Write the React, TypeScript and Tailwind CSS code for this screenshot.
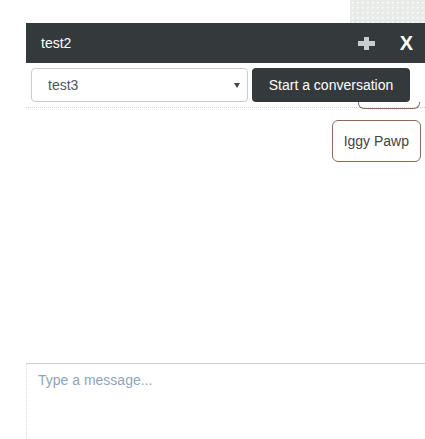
import React from 'react';

const ChatPanel: React.FC = () => {
  return (
    <div className="ml-[26px] flex flex-1 flex-col">
      <div className="flex h-[40px] items-center bg-[#343a3b] pl-[15px] pr-[12px] text-[14px] text-white">
        <span className="flex-1">test2</span>
        <svg width="17" height="13" viewBox="0 0 17 13" className="mr-[25px]">
          <rect x="0" y="4" width="17" height="5" fill="#c9cdd0" />
          <rect x="6" y="0" width="5" height="13" fill="#c9cdd0" />
        </svg>
        <span className="text-[20px] font-bold leading-none">X</span>
      </div>

      <div className="relative flex gap-[4px] border-b border-dotted border-[#d6d6d6] pb-[5px] pl-[5px] pr-[15px] pt-[5px]">
        {/* bottom of an earlier message, scrolled under the controls */}
        <div className="absolute right-[5px] top-[39px] h-[7px] w-[62px] rounded-b-[6px] border border-t-0 border-[#8b6a5a]" />
        <div className="relative z-10 flex h-[34px] w-[217px] items-center rounded-[4px] border border-[#ccc] bg-white pl-[16px] pr-[7px] text-[14px] text-[#555]">
          <span className="flex-1">test3</span>
          <svg width="6" height="5" viewBox="0 0 6 5">
            <path d="M0 0 H6 L3 5 Z" fill="#444" />
          </svg>
        </div>
        <button className="relative z-10 h-[34px] w-[158px] rounded-[4px] bg-[#343a3b] text-[14px] text-white">
          Start a conversation
        </button>
      </div>

      <div className="flex flex-1 flex-col items-end pr-[4px] pt-[12px]">
        <div className="flex h-[42px] items-center rounded-[6px] border border-[#8b6a5a] px-[11px] text-[14px] text-[#444]">
          Iggy Pawp
        </div>
      </div>

      <div className="h-[76px] border-l border-t border-l-[#ddd] border-t-[#cdd2d4] pl-[11px] pt-[6px] text-[14px] text-[#8fa5bc] [border-left-style:dotted]">
        Type a message...
      </div>
    </div>
  );
};

const App: React.FC = () => {
  return (
    <div className="flex h-[439px] w-[425px] flex-col overflow-hidden bg-white font-['Liberation_Sans',Arial,sans-serif]">
      <div className="flex h-[23px] justify-end">
        <div className="h-full w-[75px] bg-[#e8ebe8] bg-[radial-gradient(#fafafa_1px,transparent_1px)] bg-[size:5px_5px]" />
      </div>
      <ChatPanel />
    </div>
  );
};

export default App;
